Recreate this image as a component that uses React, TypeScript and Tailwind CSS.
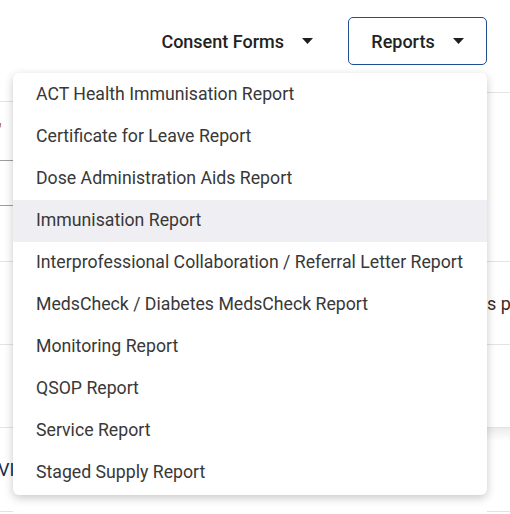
const reports = [
    "ACT Health Immunisation Report",
    "Certificate for Leave Report",
    "Dose Administration Aids Report",
    "Immunisation Report",
    "Interprofessional Collaboration / Referral Letter Report",
    "MedsCheck / Diabetes MedsCheck Report",
    "Monitoring Report",
    "QSOP Report",
    "Service Report",
    "Staged Supply Report",
];

const Caret = () => (
    <svg width="11" height="6" viewBox="0 0 11 6" className="shrink-0">
        <polygon points="0,0 11,0 5.5,6" fill="#1f1f1f" />
    </svg>
);

const App = () => {
    return (
        <div className="relative w-[510px] h-[514px] overflow-hidden bg-white font-['Roboto','Liberation_Sans',sans-serif]">
            {/* top bar */}
            <header className="h-[80px] flex items-start justify-end gap-[11px] pt-[17px] pr-[23px]">
                <button className="h-[48px] flex items-center gap-[18px] px-[24px] text-[18px] font-medium text-[#222]">
                    Consent Forms
                    <Caret />
                </button>
                <button className="h-[48px] w-[139px] flex items-center justify-center gap-[18px] rounded-[5px] border border-[#1d4f91] text-[18px] font-medium text-[#222]">
                    Reports
                    <Caret />
                </button>
            </header>

            {/* page content partly hidden behind the menu */}
            <div className="flex">
                <div className="w-[13px] overflow-hidden text-[18px] text-[#333]">
                    <div className="h-[22px] border-b border-[#e3e3e3]" />
                    <div className="h-[59px] border-b border-[#9e9e9e] flex items-center -ml-[4px] text-[#b45309] leading-none">"</div>
                    <div className="h-[45px] border-b border-[#9e9e9e]" />
                    <div className="h-[56px] border-b border-[#e3e3e3]" />
                    <div className="h-[83px] border-b border-[#e3e3e3]" />
                    <div className="h-[83px] border-b border-[#e3e3e3]" />
                    <div className="h-[84px] border-b border-[#e3e3e3] flex items-center -ml-[2px] whitespace-nowrap text-[#1a2a4a]">VIC</div>
                </div>
                <div className="flex-1" />
                <div className="w-[23px] overflow-hidden text-[18px] text-[#3a2a22]">
                    <div className="h-[13px] border-b border-[#e3e3e3]" />
                    <div className="h-[169px] border-b border-[#e3e3e3]" />
                    <div className="h-[83px] border-b border-[#e3e3e3] flex items-center whitespace-nowrap">s p</div>
                    <div className="h-[83px] border-b border-[#e3e3e3]" />
                    <div className="h-[84px] border-b border-[#e3e3e3] bg-gradient-to-b from-[#ececec] to-white to-[16%]" />
                </div>
            </div>

            {/* reports dropdown */}
            <ul className="absolute top-[73px] left-[13px] w-[474px] py-[1px] rounded-[6px] bg-white shadow-[0_3px_10px_rgba(0,0,0,0.22)]">
                {reports.map((r) => (
                    <li
                        key={r}
                        className={`h-[42px] flex items-center pl-[23px] pb-[1px] text-[17.7px] text-[#383838] whitespace-nowrap ${r === "Immunisation Report" ? "bg-[#efeff3]" : ""}`}
                    >
                        {r}
                    </li>
                ))}
            </ul>
        </div>
    );
};

export default App;
